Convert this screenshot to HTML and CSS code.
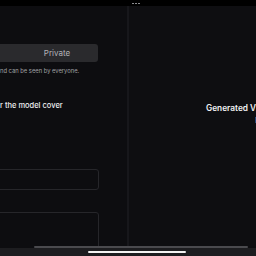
FILE: index.html
```html
<!DOCTYPE html>
<html lang="en">
<head>
<meta charset="UTF-8">
<meta name="viewport" content="width=device-width, initial-scale=1.0">
<title>Model Settings</title>
<link rel="stylesheet" href="styles.css">
</head>
<body>

<div class="topbar">
    <div class="grip"><span></span><span></span><span></span></div>
</div>

<div class="main">
    <div class="left-panel">
        <div class="segmented">
            <div class="seg-option">Public</div>
            <div class="seg-option active">Private</div>
        </div>
        <p class="hint">nd can be seen by everyone.</p>
        <p class="section-title">r the model cover</p>
        <div class="field"></div>
        <div class="field field-tall"></div>
    </div>
    <div class="divider"></div>
    <div class="right-panel">
        <p class="placeholder-title">Generated Video</p>
        <p class="placeholder-sub">Re</p>
    </div>
</div>

<div class="hscroll">
    <div class="hscroll-line"></div>
</div>

<div class="bottombar">
    <div class="thumb"></div>
</div>

</body>
</html>
```

FILE: styles.css
```css
body {
    margin: 0;
    padding: 0;
    width: 256px;
    height: 256px;
    overflow: hidden;
    background-color: #0d0d10;
    font-family: Inter, "Noto Sans", sans-serif;
    color: #e8e8ea;
    -webkit-font-smoothing: antialiased;
}
p {
    margin: 0;
}
.topbar {
    height: 6px;
    background-color: #000;
    display: flex;
    justify-content: center;
    align-items: center;
    padding-left: 16px;
}
.grip {
    display: flex;
    gap: 1px;
}
.grip span {
    width: 2px;
    height: 1px;
    background-color: #8a8a8e;
}
.main {
    display: flex;
    height: 240px;
}
.left-panel {
    width: 127px;
    overflow: hidden;
    display: flex;
    flex-direction: column;
}
.left-panel > * {
    flex-shrink: 0;
}
.segmented {
    display: flex;
    margin-top: 38px;
    margin-left: -66px;
    width: 164px;
    height: 18px;
    background-color: #2a2a2d;
    border-radius: 3px;
}
.seg-option {
    flex: 1;
    display: flex;
    justify-content: center;
    align-items: center;
    font-size: 8px;
    color: #8a8a8e;
    border-radius: 3px;
}
.seg-option.active {
    color: #b4b4b8;
}
.hint {
    margin-top: 5px;
    font-size: 5.8px;
    line-height: 7px;
    color: #a0a0a4;
    white-space: nowrap;
}
.section-title {
    margin-top: 26px;
    font-size: 7.5px;
    line-height: 11px;
    font-weight: 500;
    color: #ededf0;
    white-space: nowrap;
}
.field {
    margin-top: 58px;
    margin-left: -9px;
    width: 106px;
    height: 19px;
    border: 1px solid #26262a;
    border-radius: 3px;
}
.field-tall {
    margin-top: 22px;
    height: 60px;
}
.divider {
    width: 2px;
    background-color: #17171b;
}
.right-panel {
    flex: 1;
    overflow: hidden;
    background-color: #0e0e11;
}
.placeholder-title {
    margin-top: 97px;
    padding-left: 77px;
    font-size: 8.3px;
    line-height: 11px;
    font-weight: 600;
    white-space: nowrap;
    color: #f0f0f2;
}
.placeholder-sub {
    margin-top: 1px;
    padding-left: 126px;
    font-size: 8px;
    line-height: 11px;
    color: #b0b0b4;
    white-space: nowrap;
}
.hscroll {
    height: 2px;
}
.hscroll-line {
    margin-left: 34px;
    width: 214px;
    height: 2px;
    background-color: #4a4a4e;
    border-radius: 1px;
}
.bottombar {
    height: 8px;
    background-color: #1d1d20;
    padding-top: 3px;
    box-sizing: border-box;
}
.thumb {
    margin-left: 88px;
    width: 98px;
    height: 2px;
    background-color: #f2f2f2;
    border-radius: 1px;
}
```
